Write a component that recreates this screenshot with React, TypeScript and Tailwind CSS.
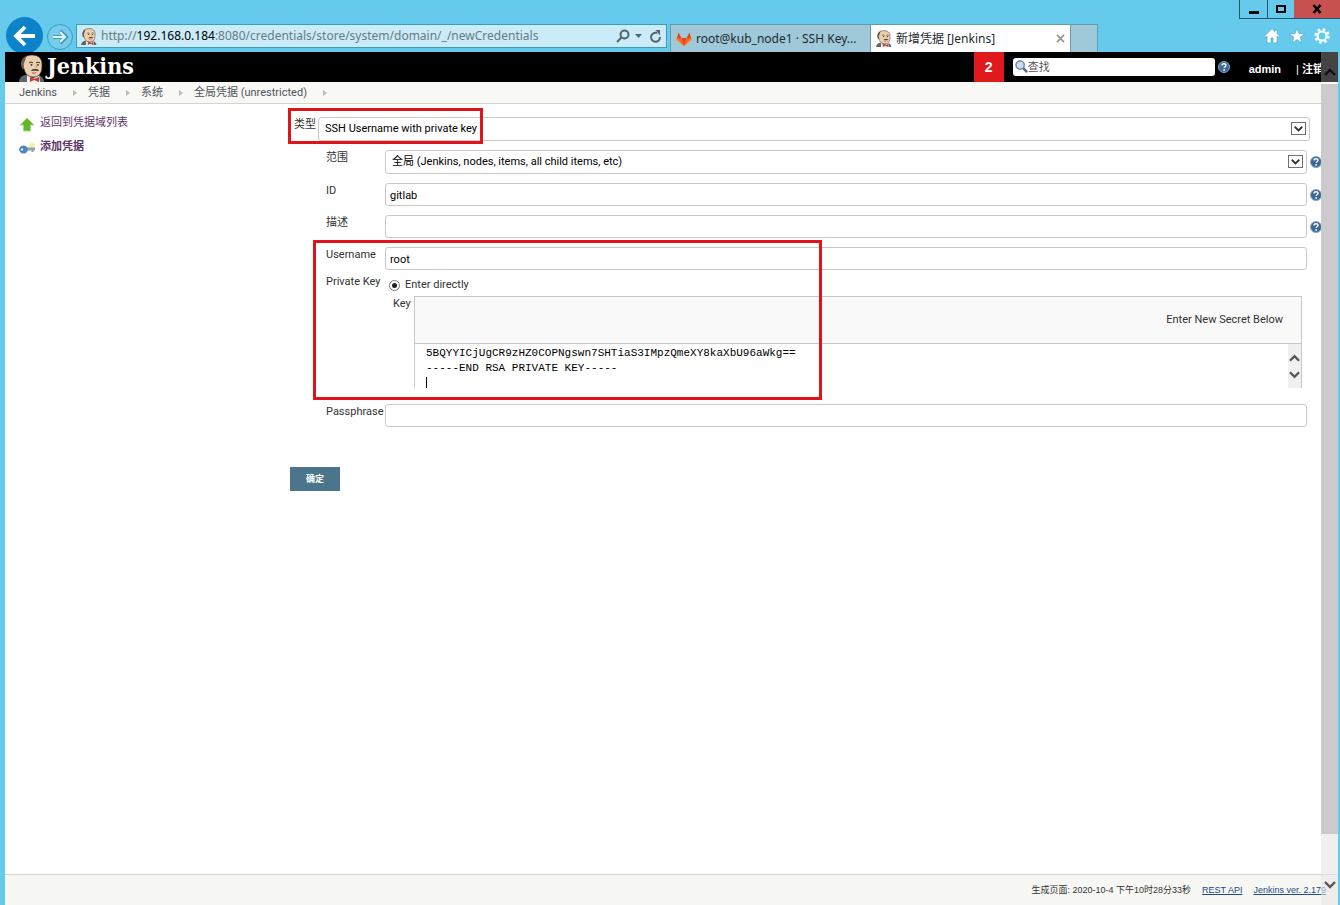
import type { ReactNode } from "react";

const KEY_TEXT = "5BQYYICjUgCR9zHZ0COPNgswn7SHTiaS3IMpzQmeXY8kaXbU96aWkg==\n-----END RSA PRIVATE KEY-----\n";

function Butler({ className }: { className: string }) {
  return (
    <svg viewBox="0 0 26 28" className={className} aria-hidden="true">
      <path d="M0 28c0-3 2-6 6-7h13c4 1 6 4 6 7z" fill="#5b666c" />
      <path d="M8 20l6 5 6-5 1 8H8z" fill="#f3efe9" />
      <path d="M4 12C2 5 6 1 13 1c7 0 10 4 10 9 0 4 0 7-2 10-2 3-7 4-11 2-3-1-4-4-5-7-2 0-2-2-1-3z" fill="#eccfae" stroke="#40372f" strokeWidth="0.8" />
      <path d="M2.500 13C1 8 3 3 8 2 6 4 6.500 6 5.500 8l-1 2 .8 5c-1.500 0-2.300-1-2.800-2z" fill="#6a5a4c" />
      <path d="M10 9c1-1 3-1 4 0M17 9c1-1 3-1 4 0" fill="none" stroke="#3b2f27" strokeWidth="1" />
      <circle cx="12.500" cy="10.800" r="0.900" fill="#222" />
      <circle cx="19" cy="10.800" r="0.900" fill="#222" />
      <path d="M16.500 11c1 1 2 2 0 3" fill="none" stroke="#a57a58" strokeWidth="0.800" />
      <path d="M12 16.500c2-2 3-1.500 4-1.500s3-.5 4 1.500c-2 1-3 .3-4 .3s-3 .7-4-.3z" fill="#514438" />
      <path d="M13 18.500c1 1 3 1 4 0" fill="none" stroke="#8d4a38" strokeWidth="0.800" />
      <path d="M11 23l4 2 5-2v5l-5-2-4 2z" fill="#d3352e" />
    </svg>
  );
}

function GitlabLogo() {
  return (
    <svg viewBox="0 0 18 16" className="h-4 w-4 shrink-0" aria-hidden="true">
      <path d="M9 16L0 9 3 1l3 6h6l3-6 3 8z" fill="#fc8a26" />
      <path d="M9 16L6 7h6z" fill="#e24329" />
      <path d="M9 16L1 7h5zM9 16l8-9h-5z" fill="#f2652a" />
      <path d="M3 1L1 7h5zM15 1l2 6h-5z" fill="#d9432b" />
    </svg>
  );
}

function Help() {
  return (
    <a href="#help" aria-label="Help" className="block h-3 w-3 shrink-0">
      <svg viewBox="0 0 12 12" className="h-3 w-3" aria-hidden="true">
        <circle cx="6" cy="6" r="5.500" fill="#3b6795" stroke="#84a5c4" />
        <path d="M4 4.600c0-2.600 4-2.400 4-.300C8 5.700 6.100 5.700 6.100 7" fill="none" stroke="#fff" strokeWidth="1.400" />
        <circle cx="6.100" cy="9" r="0.900" fill="#fff" />
      </svg>
    </a>
  );
}

function Chevron({ up = false, className }: { up?: boolean; className: string }) {
  return (
    <svg viewBox="0 0 12 8" className={className} fill="none" stroke="currentColor" strokeWidth="2.400" aria-hidden="true">
      <path d={up ? "M1 7l5-5 5 5" : "M1 1l5 5 5-5"} />
    </svg>
  );
}

function Select({ id, value }: { id: string; value: string }) {
  return (
    <div className="relative min-w-0 flex-1">
      <select id={id} className="block h-6 w-full appearance-none rounded-[3px] border border-[#c8c8c8] bg-white pr-6 pl-[6px] text-[11px] text-black">
        <option>{value}</option>
      </select>
      <span className="pointer-events-none absolute top-[5px] right-1 flex h-[13px] w-[15px] items-center justify-center border border-[#707070] bg-white text-[#333]">
        <Chevron className="h-[6px] w-[9px]" />
      </span>
    </div>
  );
}

function Row({ id, label, help, children }: { id: string; label: string; help?: boolean; children: ReactNode }) {
  return (
    <div className="flex items-start">
      <label htmlFor={id} className="w-[59px] shrink-0 whitespace-nowrap">{label}</label>
      {children}
      <span className="w-[14px] shrink-0 self-center pl-[3px]">{help && <Help />}</span>
    </div>
  );
}

function TextField({ id, value = "", type = "text" }: { id: string; value?: string; type?: string }) {
  return (
    <input id={id} type={type} defaultValue={value} className="h-[23px] min-w-0 flex-1 rounded-[3px] border border-[#c8c8c8] bg-white px-1 pt-[2px] text-[11px] text-black" />
  );
}

function BrowserChrome() {
  return (
    <header className="flex h-[52px] shrink-0 flex-col overflow-hidden font-['Noto_Sans','Noto_Sans_CJK_SC',sans-serif] text-[12px]">
      <div className="flex h-6 items-start justify-end">
        <div className="flex h-[19px] border-b border-l border-[#23596b] text-black">
          <button aria-label="Minimize" className="flex w-7 items-center justify-center border-r border-[#23596b]">
            <svg viewBox="0 0 12 12" className="h-3 w-3"><path d="M1 8h10v3H1z" /></svg>
          </button>
          <button aria-label="Maximize" className="flex w-[26px] items-center justify-center">
            <svg viewBox="0 0 12 12" className="h-3 w-3"><path d="M2 3h8v6H2z" fill="none" stroke="currentColor" strokeWidth="2" /></svg>
          </button>
          <button aria-label="Close" className="flex w-[46px] items-center justify-center bg-[#c75050]">
            <svg viewBox="0 0 12 12" className="h-3 w-3"><path d="M2.500 2l7 8M9.500 2l-7 8" stroke="currentColor" strokeWidth="2.600" /></svg>
          </button>
        </div>
      </div>
      <div className="flex h-7 items-start pl-[6px]">
        <button aria-label="Back" className="-mt-[7px] flex h-[37px] w-[37px] shrink-0 items-center justify-center rounded-full bg-[#0c82c9] text-white">
          <svg viewBox="0 0 24 24" className="h-6 w-6" fill="none" stroke="currentColor" strokeWidth="3.800"><path d="M22 12H4M12 3l-9 9 9 9" /></svg>
        </button>
        <button aria-label="Forward" className="mr-[3px] ml-1 flex h-[26px] w-[26px] shrink-0 items-center justify-center rounded-full border border-[#3b9cc4] bg-[#76cdeb] text-[#e2f5fc]">
          <svg viewBox="0 0 18 18" className="h-[18px] w-[18px]" fill="none"><path d="M2 9h13M9 3l6 6-6 6" stroke="#3f9cc2" strokeWidth="4" /><path d="M2 9h12M9 4l5 5-5 5" stroke="currentColor" strokeWidth="2" /></svg>
        </button>
        <div className="flex h-6 min-w-0 flex-1 items-center border border-[#3f9bbd] bg-[#c9ecf8] px-1 text-[#6b7a80]">
          <Butler className="h-[17px] w-4 shrink-0" />
          <p className="ml-1 min-w-0 flex-1 truncate leading-5">
            http://<span className="text-black">192.168.0.184</span>:8080/credentials/store/system/domain/_/newCredentials
          </p>
          <button aria-label="Search">
            <svg viewBox="0 0 14 14" className="h-[14px] w-[14px]" fill="none" stroke="#54656b" strokeWidth="2"><circle cx="8.500" cy="5.500" r="4" /><path d="M5.500 8.500L1 13" /></svg>
          </button>
          <button aria-label="Show address list" className="mr-[7px] ml-[5px]">
            <svg viewBox="0 0 7 4" className="h-1 w-[7px]"><path d="M0 0h7L3.500 4z" fill="#54656b" /></svg>
          </button>
          <button aria-label="Refresh">
            <svg viewBox="0 0 13 13" className="h-[13px] w-[13px]"><path d="M11 7A4.500 4.500 0 1 1 8 3" fill="none" stroke="#54656b" strokeWidth="2" /><path d="M6.500 0H11v5.500z" fill="#54656b" /></svg>
          </button>
        </div>
        <nav aria-label="Tabs" className="ml-[3px] flex h-7 shrink-0 border-t border-l border-[#5f9db2] text-[#1d2b30]">
          <button className="flex w-[200px] items-center gap-1 border-r border-[#5f9db2] bg-[#9fc8d8] px-[5px] whitespace-nowrap">
            <GitlabLogo />root@kub_node1 · SSH Key...
          </button>
          <button className="flex w-[199px] items-center gap-1 bg-white px-[5px] whitespace-nowrap">
            <Butler className="h-[17px] w-4 shrink-0" />
            <span className="flex-1 text-left">新增凭据 [Jenkins]</span>
            <svg viewBox="0 0 10 10" className="h-[9px] w-[9px]"><path d="M1 1l8 8M9 1L1 9" stroke="#999" strokeWidth="2" /></svg>
          </button>
          <button aria-label="New tab" className="w-7 border-x border-[#5f9db2] bg-[#9fc8d8]" />
        </nav>
        <div className="flex h-6 w-[242px] shrink-0 items-center justify-end gap-[9px] pr-[10px] text-white">
          <button aria-label="Home">
            <svg viewBox="0 0 16 16" className="h-4 w-4" fill="currentColor" stroke="#4a9dbb" strokeWidth="0.600"><path d="M8 .8L.5 8l1 1.200L3 8v7h4v-5h2v5h4V8l1.500 1.200 1-1.200L13 5.500V2h-2v1.700z" /></svg>
          </button>
          <button aria-label="Favorites">
            <svg viewBox="0 0 16 16" className="h-4 w-4" fill="currentColor" stroke="#4a9dbb" strokeWidth="0.600"><path d="M8 .3l2 5.500h5.700l-4.500 3.500 1.700 5.700L8 11.600 3.100 15l1.700-5.700L.3 5.800H6z" /></svg>
          </button>
          <button aria-label="Tools">
            <svg viewBox="0 0 16 16" className="h-4 w-4" fill="none" stroke="currentColor"><circle cx="8" cy="8" r="6.500" strokeWidth="2.500" strokeDasharray="2.550 2.550" /><circle cx="8" cy="8" r="4.500" strokeWidth="2" /></svg>
          </button>
        </div>
      </div>
    </header>
  );
}

function JenkinsBar() {
  return (
    <div className="flex h-[30px] shrink-0 items-center bg-black pr-[14px] pl-[14px] font-['Liberation_Sans','Noto_Sans_CJK_SC',sans-serif] font-bold text-white">
      <a href="#home" className="flex h-[30px] flex-1 items-end">
        <Butler className="h-7 w-[26px]" />
        <span className="ml-[2px] font-['DejaVu_Serif_Condensed','DejaVu_Serif',serif] text-[23px] leading-8">Jenkins</span>
      </a>
      <a href="#notices" className="flex h-[30px] w-[30px] items-center justify-center bg-[#e01a1c] text-[14px]">2</a>
      <form className="relative ml-[9px] w-[202px]">
        <svg viewBox="0 0 14 14" className="pointer-events-none absolute top-[2px] left-[2px] h-[13px] w-[13px]" aria-hidden="true">
          <path d="M8 8l5 5" stroke="#56657b" strokeWidth="2.500" /><circle cx="5.500" cy="5.500" r="4.500" fill="#c9def2" stroke="#71869f" strokeWidth="1.500" />
        </svg>
        <input aria-label="查找" placeholder="查找" className="block h-[18px] w-full rounded-[3px] bg-white pr-1 pl-[15px] text-[11px] font-normal text-black placeholder:text-[#555]" />
      </form>
      <span className="ml-[3px]"><Help /></span>
      <a href="#admin" className="ml-[19px] pt-1">admin</a>
      <span className="ml-[15px] pt-1 whitespace-nowrap"><span className="font-normal">| </span><a href="#logout">注销</a></span>
    </div>
  );
}

function Breadcrumbs() {
  return (
    <nav aria-label="Breadcrumb" className="h-[22px] shrink-0 border-b border-[#d3d5d0] bg-[#f8f8f4] pl-[14px]">
      <ul className="flex h-[21px] items-center text-[#4d545d]">
        {["Jenkins", "凭据", "系统", "全局凭据 (unrestricted)"].map((text) => (
          <li key={text} className="flex items-center">
            <a href="#crumb">{text}</a>
            <svg viewBox="0 0 4 6" className="mr-[11px] ml-4 h-[6px] w-1" aria-hidden="true"><path d="M0 0l4 3-4 3z" fill="#bbb" /></svg>
          </li>
        ))}
      </ul>
    </nav>
  );
}

function SidePanel() {
  return (
    <aside className="w-[285px] shrink-0 pt-[11px] pl-[14px] text-[#5c3566]">
      <a href="#back" className="flex h-6 items-start gap-[5px]">
        <svg viewBox="0 0 16 16" className="mt-[2px] h-4 w-4"><path d="M8 1l7 7h-3.500v6h-7V8H1z" fill="#62b62c" stroke="#a7d88a" /></svg>
        返回到凭据域列表
      </a>
      <a href="#add" className="flex h-6 items-start gap-[5px] font-bold">
        <svg viewBox="0 0 16 16" className="mt-[2px] h-4 w-4"><circle cx="13" cy="4.500" r="3" fill="#f8efa6" /><path d="M7 6.500h9v3h-1.500V11h-2V9.500H7z" fill="#8fa1b5" /><ellipse cx="4.500" cy="8.500" rx="4.300" ry="4" fill="#4f82c2" /><circle cx="3" cy="8.500" r="1.200" fill="#d8e5f3" /></svg>
        添加凭据
      </a>
    </aside>
  );
}

function CredentialForm() {
  return (
    <form className="min-w-0 flex-1 pt-[13px]">
      <div className="relative flex items-start pr-[11px] pl-1">
        <label htmlFor="kind" className="w-6 shrink-0 whitespace-nowrap">类型</label>
        <Select id="kind" value="SSH Username with private key" />
        <span className="pointer-events-none absolute -top-[9px] -left-[2px] h-9 w-[195px] border-3 border-[#e0141a]" />
      </div>
      <div className="mt-[9px] flex flex-col gap-[9px] pl-9">
        <Row id="scope" label="范围" help><Select id="scope" value="全局 (Jenkins, nodes, items, all child items, etc)" /></Row>
        <Row id="cred-id" label="ID" help><TextField id="cred-id" value="gitlab" /></Row>
        <Row id="description" label="描述" help><TextField id="description" /></Row>
      </div>
      <div className="relative mt-[9px] pl-9">
        <Row id="username" label="Username"><TextField id="username" value="root" /></Row>
        <fieldset className="mt-1 flex items-start pr-[19px]">
          <legend className="float-left w-[59px] whitespace-nowrap">Private Key</legend>
          <div className="min-w-0 flex-1 pt-[3px]">
            <label className="flex items-center gap-[5px] pl-1">
              <input type="radio" name="source" defaultChecked className="h-[11px] w-[11px] appearance-none rounded-full border border-[#777] bg-[#222] bg-clip-content p-[2px]" />
              Enter directly
            </label>
            <div className="mt-[3px] flex items-start">
              <label htmlFor="key" className="w-[29px] shrink-0 pl-2">Key</label>
              <div className="min-w-0 flex-1 border-x border-t border-[#c8c8c8]">
                <div className="flex h-[47px] items-center justify-end border-b border-[#c8c8c8] bg-[#f9f9f9] pr-[18px]">Enter New Secret Below</div>
                <div className="relative flex h-11">
                  <textarea id="key" defaultValue={KEY_TEXT} spellCheck={false} className="h-11 min-w-0 flex-1 resize-none overflow-hidden pt-[2px] pl-[11px] font-['Liberation_Mono',monospace] text-[11px] leading-[15px] text-black outline-none" />
                  <span className="absolute top-[33px] left-[11px] h-[11px] w-px bg-black" />
                  <div className="flex w-[13px] shrink-0 flex-col items-center justify-center gap-[9px] bg-[#f0f0f0] text-[#555]">
                    <Chevron up className="h-2 w-[11px]" />
                    <Chevron className="h-2 w-[11px]" />
                  </div>
                </div>
              </div>
            </div>
          </div>
        </fieldset>
        <span className="pointer-events-none absolute -top-[7px] left-[23px] h-40 w-[509px] border-3 border-[#e0141a]" />
      </div>
      <div className="mt-4 pl-9">
        <Row id="passphrase" label="Passphrase"><TextField id="passphrase" type="password" /></Row>
      </div>
      <button type="button" className="mt-10 h-6 w-[50px] bg-[#4b758b] text-[9px] font-bold text-white">确定</button>
    </form>
  );
}

export default function App() {
  return (
    <div className="flex min-h-screen flex-col bg-[#65caeb]">
      <BrowserChrome />
      <div className="relative mr-[2px] ml-[5px] flex flex-1 flex-col bg-white font-['Roboto','Noto_Sans_CJK_SC',sans-serif] text-[11px] leading-4 text-[#333]">
        <JenkinsBar />
        <Breadcrumbs />
        <main className="flex flex-1 pr-[17px]">
          <SidePanel />
          <CredentialForm />
        </main>
        <footer className="flex h-[31px] shrink-0 items-center justify-end gap-[11px] border-t border-[#d3d5d0] bg-[#f7f8f3] pr-3 font-['Liberation_Sans','Noto_Sans_CJK_SC',sans-serif] text-[9px]">
          <span>生成页面: 2020-10-4 下午10时28分33秒</span>
          <a href="#api" className="text-[#204a87] underline">REST API</a>
          <a href="#version" className="text-[#204a87] underline">Jenkins ver. 2.179</a>
        </footer>
        <div className="pointer-events-none absolute inset-y-0 right-0 flex w-[17px] flex-col" aria-hidden="true">
          <div className="flex h-[30px] items-end justify-center bg-[#444] pb-[6px] text-[#111]"><Chevron up className="h-2 w-3" /></div>
          <div className="mt-[2px] flex-1 bg-[#cdcacd]" />
          <div className="flex h-[71px] items-end justify-center bg-[#e8e6e8]/60 pb-4 text-[#555]"><Chevron className="h-2 w-3" /></div>
        </div>
      </div>
    </div>
  );
}
